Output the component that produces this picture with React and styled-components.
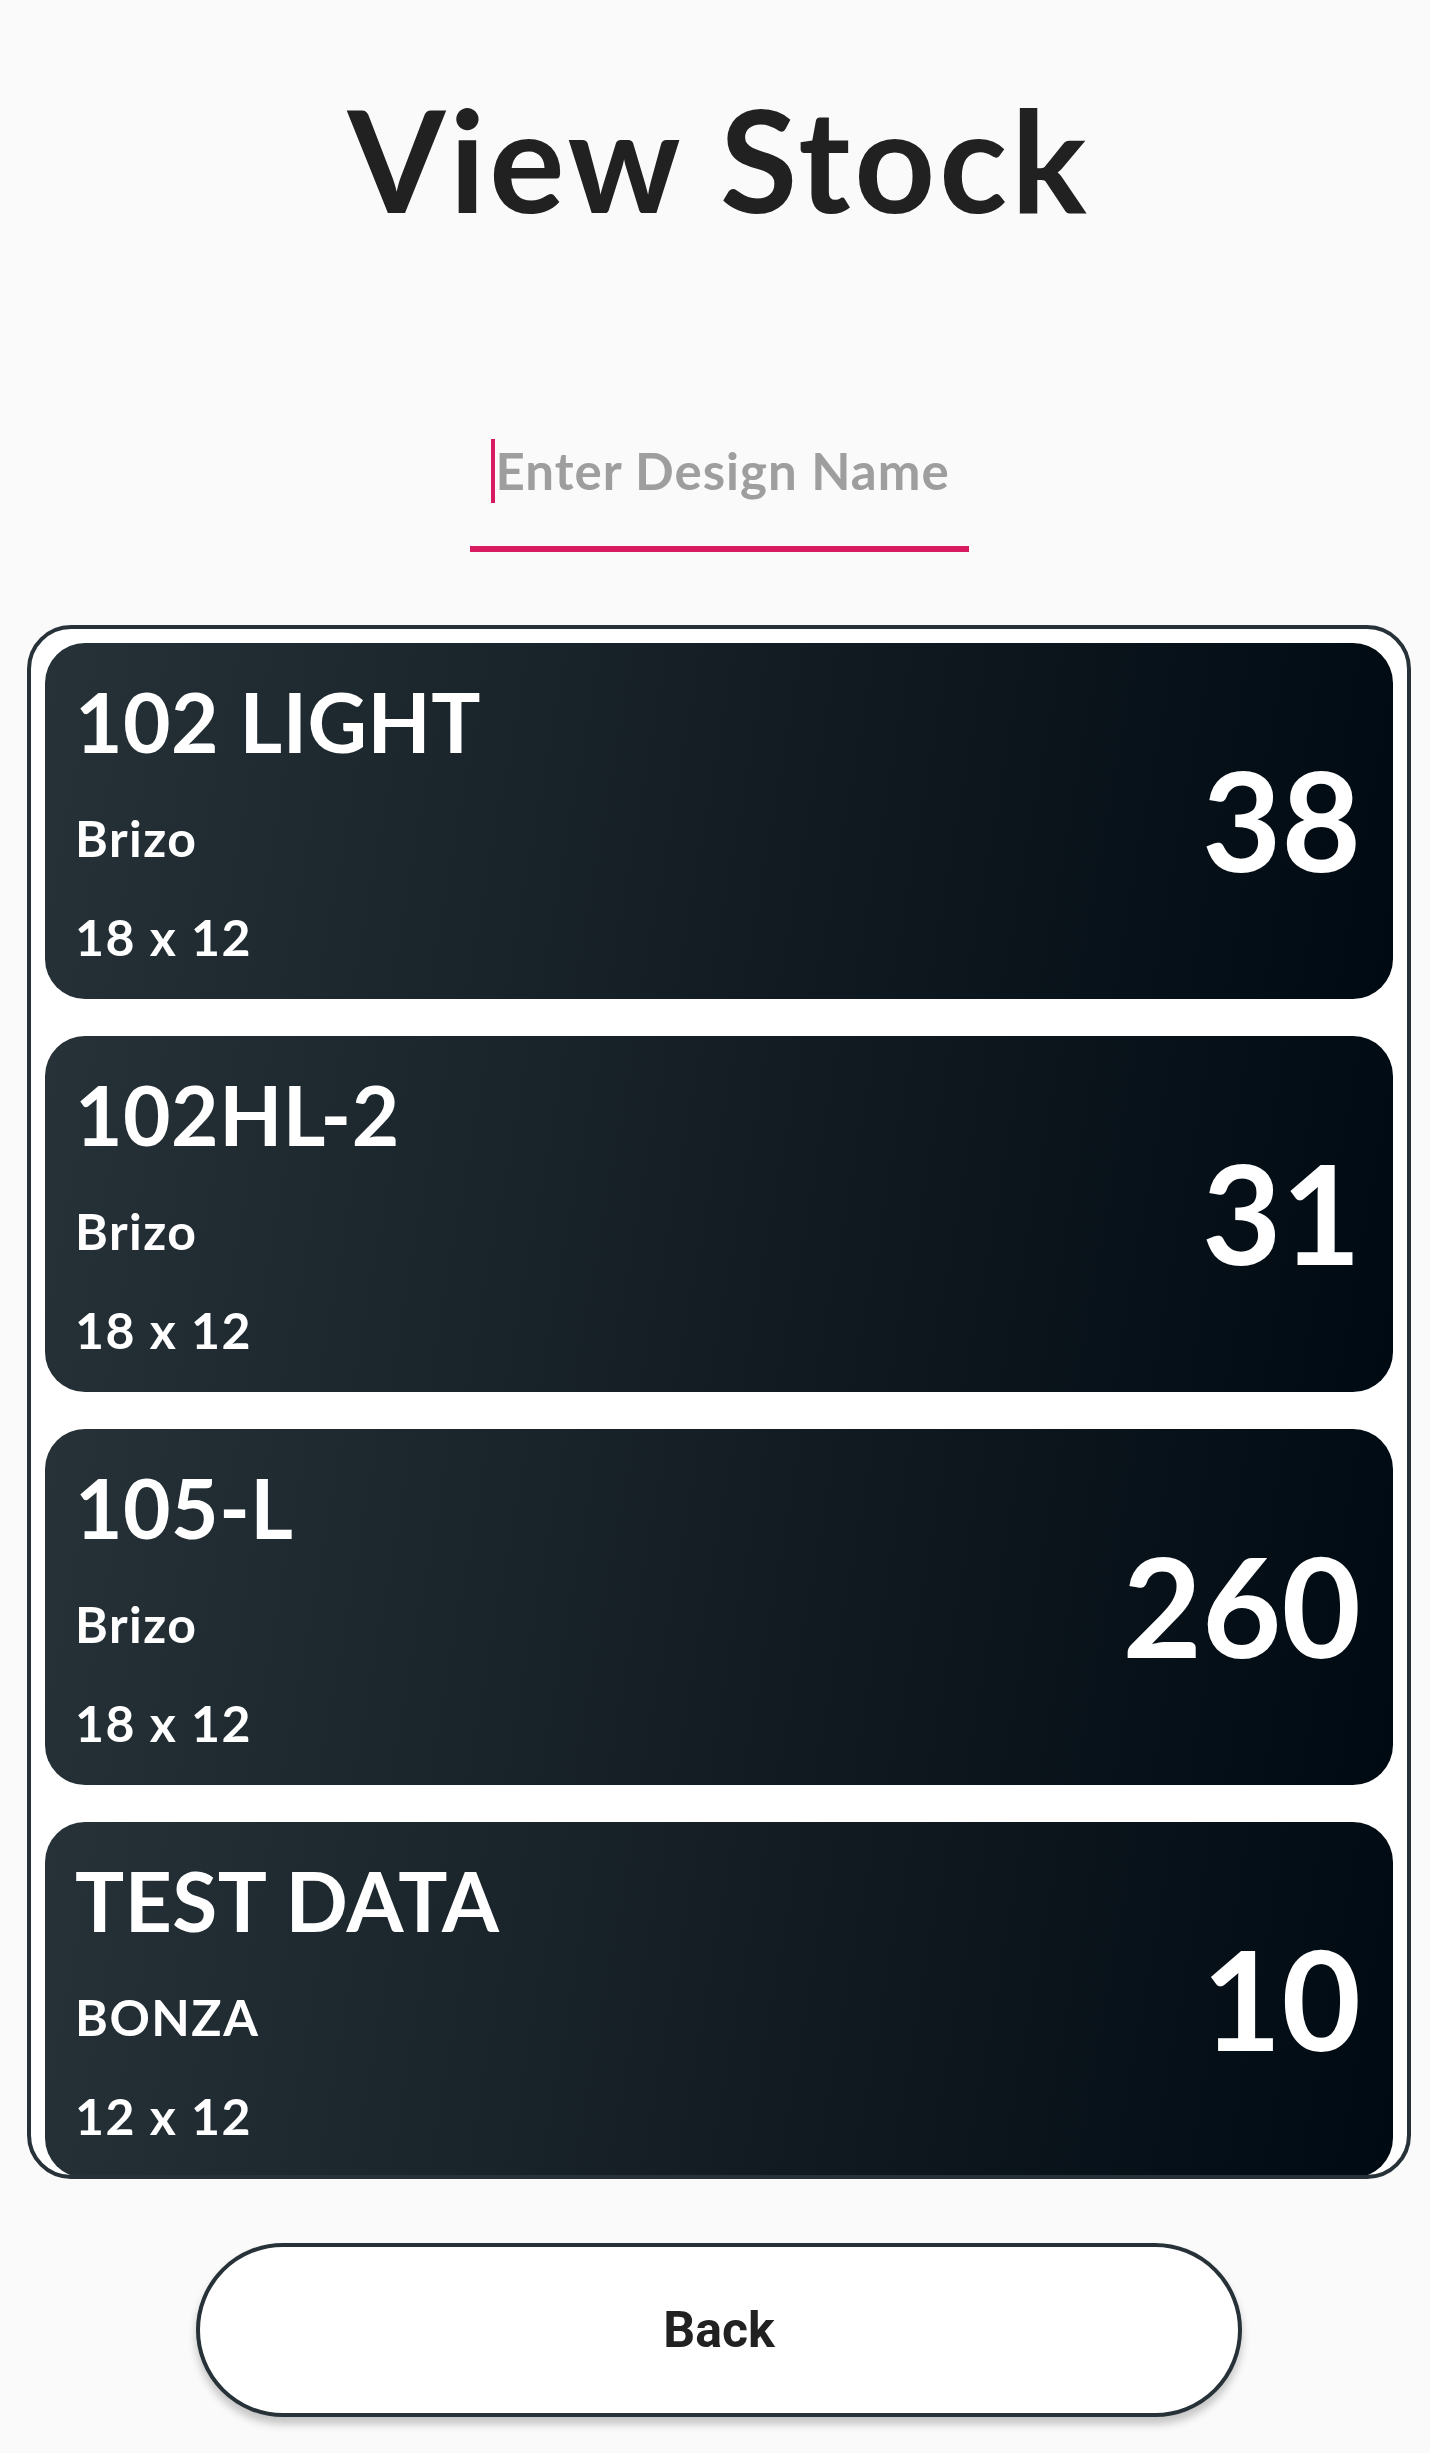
import React from 'react';
import styled, { createGlobalStyle } from 'styled-components';

const GlobalStyle = createGlobalStyle`
  html, body {
    margin: 0;
    padding: 0;
    background-color: #fafafa;
  }

  body {
    font-family: Lato, 'Open Sans', sans-serif;
  }
`;

const StyledPage = styled.div`
  display: flex;
  flex-direction: column;
  align-items: center;
  padding: 88px 0 40px 8px;
  box-sizing: border-box;
  min-height: 2453px;
`;

const StyledTitle = styled.h1`
  margin: 0;
  font-size: 141px;
  line-height: 1;
  font-weight: 700;
  letter-spacing: 4px;
  color: #212121;
`;

const StyledSearch = styled.label`
  display: flex;
  align-items: center;
  width: 499px;
  margin-top: 210px;
  padding: 0 0 43px 21px;
  box-sizing: border-box;
  border-bottom: 6px solid #d81b60;
`;

const StyledCaret = styled.span`
  width: 4px;
  height: 64px;
  margin-right: 1px;
  background-color: #d81b60;
`;

const StyledInput = styled.input`
  flex: 1;
  min-width: 0;
  height: 64px;
  padding: 0;
  border: none;
  outline: none;
  background: transparent;
  caret-color: transparent;
  font-family: Lato, sans-serif;
  font-size: 51px;
  font-weight: 700;
  letter-spacing: 1px;
  line-height: 64px;
  color: #212121;

  &::placeholder {
    color: #9e9e9e;
    opacity: 1;
  }
`;

const StyledList = styled.div`
  align-self: stretch;
  margin: 73px 19px 0 19px;
  height: 1554px;
  padding: 14px;
  box-sizing: border-box;
  border: 4px solid #263238;
  border-radius: 44px;
  background-color: #ffffff;
  overflow: hidden;
  display: flex;
  flex-direction: column;
  gap: 37px;
`;

const StyledCard = styled.div`
  flex-shrink: 0;
  display: flex;
  justify-content: space-between;
  align-items: center;
  height: 356px;
  padding: 28px 32px 0 30px;
  box-sizing: border-box;
  border-radius: 40px;
  background: linear-gradient(100deg, #263238 0%, #121b22 55%, #000a12 100%);
  color: #ffffff;
`;

const StyledInfo = styled.div`
  display: flex;
  flex-direction: column;
  align-self: flex-start;
`;

const StyledDesign = styled.div`
  font-size: 82px;
  line-height: 100px;
  font-weight: 700;
  letter-spacing: 0.5px;
`;

const StyledDetail = styled.div`
  font-size: 50px;
  line-height: 70px;
  font-weight: 700;
  letter-spacing: 1.5px;
  margin-top: ${({ gap }) => gap}px;
`;

const StyledCount = styled.div`
  font-size: 137px;
  line-height: 1;
  font-weight: 700;
  margin-bottom: 32px;
`;

const StyledBackButton = styled.button`
  width: 1046px;
  height: 174px;
  margin-top: 64px;
  border: 4px solid #263238;
  border-radius: 87px;
  background-color: #ffffff;
  box-shadow: 0 7px 8px rgba(0, 0, 0, 0.22);
  font-family: Roboto, sans-serif;
  font-size: 50px;
  font-weight: 700;
  color: #212121;
  cursor: pointer;
`;

const stock = [
  { design: '102 LIGHT', brand: 'Brizo', size: '18 x 12', count: 38 },
  { design: '102HL-2', brand: 'Brizo', size: '18 x 12', count: 31 },
  { design: '105-L', brand: 'Brizo', size: '18 x 12', count: 260 },
  { design: 'TEST DATA', brand: 'BONZA', size: '12 x 12', count: 10 },
];

const StockCard = ({ item }) => (
  <StyledCard>
    <StyledInfo>
      <StyledDesign>{item.design}</StyledDesign>
      <StyledDetail gap={32}>{item.brand}</StyledDetail>
      <StyledDetail gap={29}>{item.size}</StyledDetail>
    </StyledInfo>
    <StyledCount>{item.count}</StyledCount>
  </StyledCard>
);

const App = () => {
  return (
    <>
      <GlobalStyle />
      <StyledPage>
        <StyledTitle>View Stock</StyledTitle>
        <StyledSearch>
          <StyledCaret />
          <StyledInput placeholder="Enter Design Name" />
        </StyledSearch>
        <StyledList>
          {stock.map(item => (
            <StockCard key={item.design} item={item} />
          ))}
        </StyledList>
        <StyledBackButton>Back</StyledBackButton>
      </StyledPage>
    </>
  );
};

export default App;
